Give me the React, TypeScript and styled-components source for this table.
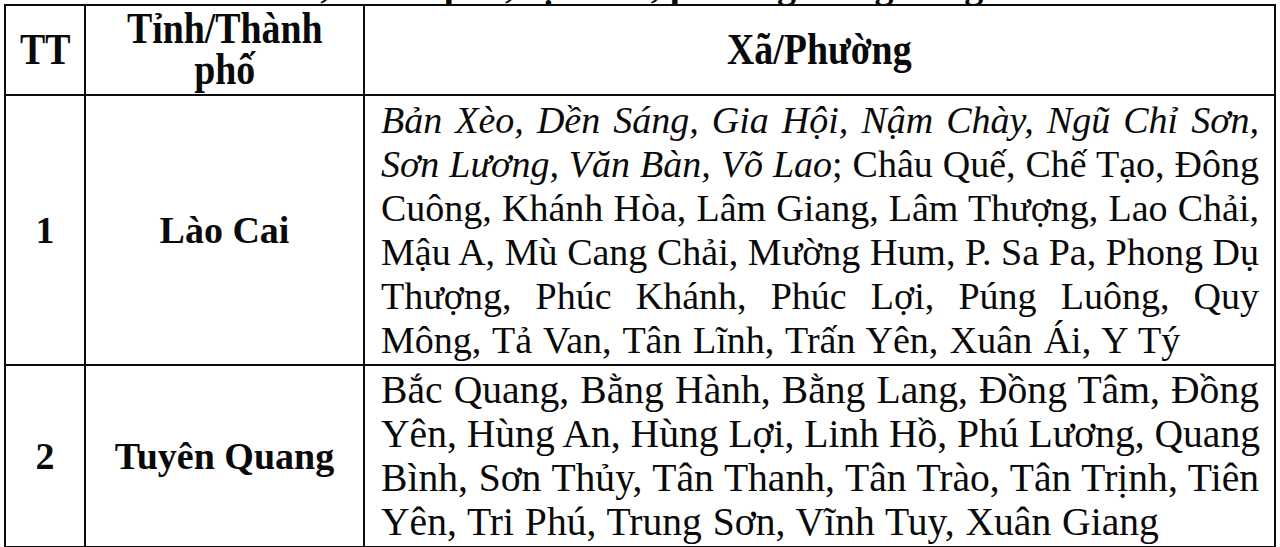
import * as React from "react";
import styled, { createGlobalStyle, css } from "styled-components";

const Global = createGlobalStyle`
  html, body {
    margin: 0;
    padding: 0;
    background: #fff;
    overflow: hidden;
  }
  body {
    font-family: "Liberation Serif", "Times New Roman", serif;
    color: #0a0a0a;
  }
`;

const Page = styled.div`
  width: 1280px;
  height: 547px;
  padding-left: 4px;
  box-sizing: border-box;
`;

const TitleClip = styled.div`
  height: 4px;
  width: 1270px;
  overflow: hidden;
  display: flex;
  align-items: flex-end;
  justify-content: center;
`;

const Title = styled.div`
  font-size: 38px;
  line-height: 38px;
  font-weight: bold;
  white-space: nowrap;
  flex: none;
  transform: translateX(-20px);
`;

const Table = styled.table`
  border-collapse: collapse;
  width: 1270px;
  table-layout: fixed;
`;

const Col = styled.col<{ $w: number }>`
  width: ${(p) => p.$w}px;
`;

const cellBase = css`
  border: 2px solid #0d0d0d;
  font-size: 38px;
  vertical-align: middle;
`;

const HeadCell = styled.th`
  ${cellBase};
  height: 86px;
  padding: 0 4px 2px;
  font-weight: bold;
  font-size: 44px;
  line-height: 41px;
  text-align: center;
`;

const Condensed = styled.span`
  display: inline-block;
  transform: scaleX(0.86);
`;

const CenterCell = styled.td`
  ${cellBase};
  font-weight: bold;
  text-align: center;
  line-height: 44px;
  padding: 0 4px;
`;

const ListCell = styled.td<{ $rowH: number; $size: number }>`
  ${cellBase};
  font-size: ${(p) => p.$size}px;
  height: ${(p) => p.$rowH}px;
  padding: 2px 15px 2px 16px;
  line-height: 44px;
  box-sizing: border-box;
`;

const Line = styled.div<{ $last?: boolean; $gap: number }>`
  height: 44px;
  white-space: nowrap;
  text-align: justify;
  text-align-last: ${(p) => (p.$last ? "left" : "justify")};
  word-spacing: ${(p) => (p.$last ? p.$gap : 0)}px;
`;

const Em = styled.i`
  font-style: italic;
`;

type Row = {
  no: string;
  name: string;
  height: number;
  size: number;
  lastGap: number;
  lines: React.ReactNode[];
};

const rows: Row[] = [
  {
    no: "1",
    name: "Lào Cai",
    height: 268,
    size: 38,
    lastGap: 2,
    lines: [
      <Em key="a">Bản Xèo, Dền Sáng, Gia Hội, Nậm Chày, Ngũ Chỉ Sơn,</Em>,
      <>
        <Em>Sơn Lương, Văn Bàn, Võ Lao</Em>; Châu Quế, Chế Tạo, Đông
      </>,
      "Cuông, Khánh Hòa, Lâm Giang, Lâm Thượng, Lao Chải,",
      "Mậu A, Mù Cang Chải, Mường Hum, P. Sa Pa, Phong Dụ",
      "Thượng, Phúc Khánh, Phúc Lợi, Púng Luông, Quy",
      "Mông, Tả Van, Tân Lĩnh, Trấn Yên, Xuân Ái, Y Tý",
    ],
  },
  {
    no: "2",
    name: "Tuyên Quang",
    height: 180,
    size: 39.6,
    lastGap: 1,
    lines: [
      "Bắc Quang, Bằng Hành, Bằng Lang, Đồng Tâm, Đồng",
      "Yên, Hùng An, Hùng Lợi, Linh Hồ, Phú Lương, Quang",
      "Bình, Sơn Thủy, Tân Thanh, Tân Trào, Tân Trịnh, Tiên",
      "Yên, Tri Phú, Trung Sơn, Vĩnh Tuy, Xuân Giang",
    ],
  },
];

export default function App() {
  return (
    <Page>
      <Global />
      <TitleClip>
        <Title>tỉnh, thành phố, vị trí xã, phường trong vùng</Title>
      </TitleClip>
      <Table>
        <colgroup>
          <Col $w={80} />
          <Col $w={279} />
          <Col $w={911} />
        </colgroup>
        <thead>
          <tr>
            <HeadCell>
              <Condensed>TT</Condensed>
            </HeadCell>
            <HeadCell>
              <Condensed>
                Tỉnh/Thành
                <br />
                phố
              </Condensed>
            </HeadCell>
            <HeadCell>
              <Condensed>Xã/Phường</Condensed>
            </HeadCell>
          </tr>
        </thead>
        <tbody>
          {rows.map((r) => (
            <tr key={r.no}>
              <CenterCell>{r.no}</CenterCell>
              <CenterCell>{r.name}</CenterCell>
              <ListCell $rowH={r.height} $size={r.size}>
                {r.lines.map((l, i) => (
                  <Line
                    key={i}
                    $gap={r.lastGap}
                    $last={i === r.lines.length - 1}
                  >
                    {l}
                  </Line>
                ))}
              </ListCell>
            </tr>
          ))}
        </tbody>
      </Table>
    </Page>
  );
}
